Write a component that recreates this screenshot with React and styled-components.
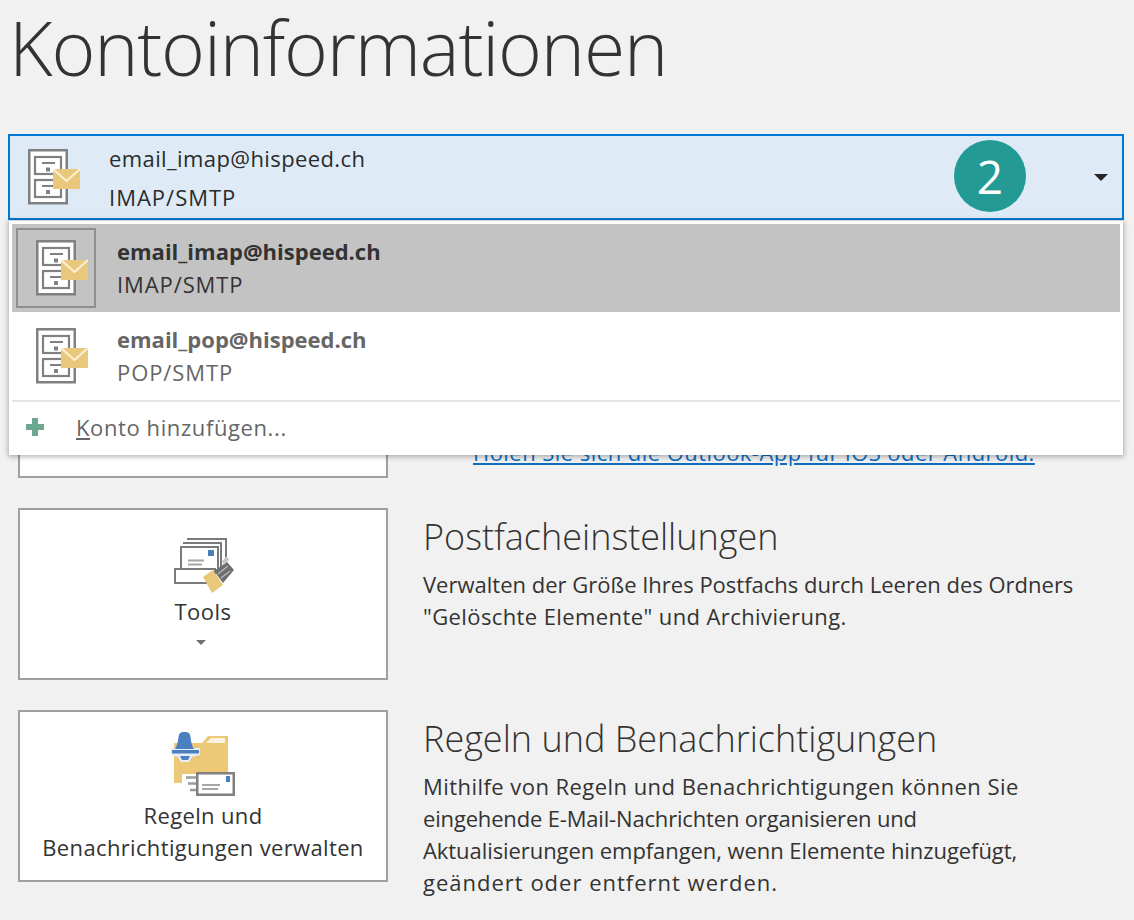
import React from 'react'
import styled, { createGlobalStyle } from 'styled-components'

const GlobalStyle = createGlobalStyle`
  html, body {
    margin: 0;
    background: #f1f1f1;
    font-family: "Open Sans", "Noto Sans", "Liberation Sans", sans-serif;
    color: #333;
  }
`

const Page = styled.div`
  width: 1134px;
  height: 920px;
  overflow: hidden;
  box-sizing: border-box;
  padding: 0 10px 0 8px;
`

const Title = styled.h1`
  margin: 0 0 40px 1px;
  font-size: 75px;
  line-height: 94px;
  font-weight: 300;
  color: #333;
  letter-spacing: -1.2px;
`

const AccountArea = styled.div`
  position: relative;
  height: 172px;
`

const Selector = styled.div`
  display: flex;
  align-items: center;
  box-sizing: border-box;
  height: 86px;
  padding: 0 14px 0 18px;
  background: #deebf7;
  border: 2px solid #0078d4;
`

const AccountText = styled.div`
  display: flex;
  flex-direction: column;
  gap: 9px;
  margin-left: 29px;
  font-size: 22px;
  line-height: 30px;
  color: #2b2b2b;
`

const Tracked = styled.span`
  letter-spacing: ${p => p.$track || 0}px;
`

const Caret = styled.span`
  display: block;
  width: 0;
  height: 0;
  border-left: ${p => p.$size}px solid transparent;
  border-right: ${p => p.$size}px solid transparent;
  border-top: ${p => p.$size}px solid ${p => p.$color};
`

const SelectorCaret = styled(Caret)`
  margin-left: auto;
`

const Badge = styled.div`
  position: absolute;
  left: 946px;
  top: 6px;
  width: 72px;
  height: 72px;
  border-radius: 50%;
  background: #249a95;
  color: #fff;
  font-size: 46px;
  font-weight: 500;
  line-height: 72px;
  text-align: center;
`

const Dropdown = styled.div`
  position: absolute;
  z-index: 2;
  left: 1px;
  top: 87px;
  width: 1114px;
  height: 234px;
  box-sizing: border-box;
  padding: 3px 3px 0;
  background: #fff;
  box-shadow: 0 1px 5px 1px rgba(0, 0, 0, 0.28);
`

const AccountRow = styled.div`
  display: flex;
  align-items: center;
  height: 88px;
  background: ${p => (p.$selected ? '#c3c3c3' : '#fff')};
`

const IconBox = styled.div`
  display: flex;
  align-items: center;
  box-sizing: border-box;
  flex: none;
  width: 80px;
  height: 80px;
  margin-left: 4px;
  padding-left: 18px;
  border: 2px solid ${p => (p.$selected ? '#8f8f8f' : 'transparent')};
`

const RowText = styled.div`
  display: flex;
  flex-direction: column;
  margin-left: 21px;
  font-size: 22px;
  line-height: 33px;
  color: ${p => (p.$selected ? '#333' : '#666')};
`

const RowName = styled.span`
  font-weight: 700;
`

const AddRow = styled.div`
  display: flex;
  align-items: center;
  box-sizing: border-box;
  height: 55px;
  padding: 0 0 4px 14px;
  border-top: 2px solid #e5e5e5;
  font-size: 22px;
  letter-spacing: 0.6px;
  color: #666;
`

const AddLabel = styled.span`
  margin-left: 32px;
`

const Key = styled.span`
  text-decoration: underline;
`

const Sections = styled.div`
  display: flex;
  flex-direction: column;
  gap: 30px;
  padding-left: 10px;
`

const Section = styled.div`
  display: flex;
  align-items: flex-start;
`

const Card = styled.div`
  display: flex;
  flex-direction: column;
  align-items: center;
  flex: none;
  box-sizing: border-box;
  width: 370px;
  height: 172px;
  padding-top: ${p => p.$top || 0}px;
  background: #fff;
  border: 2px solid #a0a0a0;
  font-size: 22px;
  line-height: 32px;
  text-align: center;
  color: #333;
`

const CardLabel = styled.div`
  margin-top: ${p => p.$gap || 0}px;
  letter-spacing: ${p => p.$track || 0}px;
  white-space: nowrap;
`

const ToolsCaret = styled(Caret)`
  margin: 13px 4px 0 0;
`

const SectionBody = styled.div`
  margin-left: 35px;
`

const Heading = styled.h2`
  margin: 6px 0 8px;
  font-size: 36px;
  line-height: 46px;
  font-weight: 300;
  color: #333;
`

const Line = styled.div`
  font-size: 22px;
  line-height: 32px;
  letter-spacing: ${p => p.$track || 0}px;
  color: #333;
  white-space: nowrap;
`

const AppLink = styled.a`
  display: block;
  margin: 130px 0 0 50px;
  font-size: 22px;
  line-height: 32px;
  letter-spacing: 0.45px;
  color: #0f6cbd;
  text-decoration: underline;
  white-space: nowrap;
`

const CabinetIcon = () => (
  <svg width="52" height="56" viewBox="0 0 52 56">
    <rect x="1.25" y="1.25" width="37.5" height="53" fill="#fff" stroke="#808080" strokeWidth="2.5" />
    <rect x="7" y="8" width="26" height="17" fill="#fff" stroke="#808080" strokeWidth="2.2" />
    <rect x="7" y="31" width="26" height="17" fill="#fff" stroke="#808080" strokeWidth="2.2" />
    <path d="M14 14h13M14 37h13" stroke="#808080" strokeWidth="2" />
    <rect x="18" y="18.500" width="4" height="4" fill="#808080" />
    <rect x="18" y="41" width="4" height="4" fill="#808080" />
    <rect x="25" y="20" width="27" height="20" fill="#e9c77b" />
    <path d="M25 20l13.500 12L52 20" fill="none" stroke="#fbf1da" strokeWidth="2" />
  </svg>
)

const ToolsIcon = () => (
  <svg width="62" height="60" viewBox="0 0 62 60">
    <path d="M15 1h39v28M11 5h38v24" fill="none" stroke="#7a7a7a" strokeWidth="2" />
    <rect x="9" y="9" width="37" height="24" fill="#fff" stroke="#7a7a7a" strokeWidth="2" />
    <rect x="36" y="12" width="6" height="6" fill="#4a7db5" />
    <path d="M16 22.500h16M16 26.500h14" stroke="#a6a6a6" strokeWidth="2" />
    <rect x="3" y="31" width="40" height="14" fill="#fff" stroke="#7a7a7a" strokeWidth="2" />
    <path d="M31 39l10-7 10 15-11 8-5-9z" fill="#e9c77b" />
    <path d="M42 33l13-9 7 8-11 13z" fill="#6e6e6e" />
    <path d="M46 36l10-8M49 40l9-7" stroke="#b5b5b5" strokeWidth="1.500" />
    <path d="M51 25l5-5" stroke="#c8c8c8" strokeWidth="4" />
  </svg>
)

const RulesIcon = () => (
  <svg width="64" height="66" viewBox="0 0 64 66">
    <path d="M3 13h28l6-7h20v47H3z" fill="#ecc877" />
    <path d="M40 8h14v5H35z" fill="#fbf3df" />
    <path d="M0 18h29v7l-8 2-3 5h-8l-3-5-7-2z" fill="#e6eef8" />
    <path d="M4 19c3-4 3-11 4-14 1-3 3-3 5.500-3s4.500 0 5.500 3c1 3 1 10 4 14z" fill="#4a80c0" />
    <rect x="1" y="20" width="27" height="3.500" fill="#4a80c0" />
    <path d="M9 26h10l-2 4h-6z" fill="#4a80c0" />
    <path d="M11 44h16v20H11z" fill="#fff" />
    <path d="M15 47.500h10M17 53.500h8M19 60h6" stroke="#9a9a9a" strokeWidth="2.500" />
    <rect x="26.250" y="43.250" width="36.500" height="21.500" fill="#fff" stroke="#808080" strokeWidth="2.500" />
    <rect x="55" y="46" width="4" height="6" fill="#4a80c0" />
    <path d="M31 55h18M31 59h16" stroke="#a6a6a6" strokeWidth="2" />
  </svg>
)

const PlusIcon = () => (
  <svg width="18" height="18" viewBox="0 0 18 18">
    <path d="M6 0h6v6h6v6h-6v6H6v-6H0V6h6z" fill="#6ba88f" />
  </svg>
)

const accounts = [
  { name: 'email_imap@hispeed.ch', type: 'IMAP/SMTP', selected: true },
  { name: 'email_pop@hispeed.ch', type: 'POP/SMTP', selected: false }
]

export default function App() {
  return (
    <Page>
      <GlobalStyle />
      <Title>Kontoinformationen</Title>
      <AccountArea>
        <Selector>
          <CabinetIcon />
          <AccountText>
            <Tracked $track={0.4}>email_imap@hispeed.ch</Tracked>
            <Tracked $track={1}>IMAP/SMTP</Tracked>
          </AccountText>
          <SelectorCaret $size={7} $color="#262626" />
        </Selector>
        <Badge>2</Badge>
        <Dropdown>
          {accounts.map(a => (
            <AccountRow key={a.name} $selected={a.selected}>
              <IconBox $selected={a.selected}>
                <CabinetIcon />
              </IconBox>
              <RowText $selected={a.selected}>
                <RowName>{a.name}</RowName>
                <Tracked $track={0.9}>{a.type}</Tracked>
              </RowText>
            </AccountRow>
          ))}
          <AddRow>
            <PlusIcon />
            <AddLabel><Key>K</Key>onto hinzufügen...</AddLabel>
          </AddRow>
        </Dropdown>
      </AccountArea>
      <Sections>
        <Section>
          <Card />
          <SectionBody>
            <AppLink>Holen Sie sich die Outlook-App für iOS oder Android.</AppLink>
          </SectionBody>
        </Section>
        <Section>
          <Card $top={28}>
            <ToolsIcon />
            <CardLabel $gap={-3} $track={0.5}>Tools</CardLabel>
            <ToolsCaret $size={5} $color="#707070" />
          </Card>
          <SectionBody>
            <Heading>Postfacheinstellungen</Heading>
            <Line>Verwalten der Größe Ihres Postfachs durch Leeren des Ordners</Line>
            <Line $track={0.4}>"Gelöschte Elemente" und Archivierung.</Line>
          </SectionBody>
        </Section>
        <Section>
          <Card $top={18}>
            <RulesIcon />
            <CardLabel $gap={3} $track={0.35}>Regeln und</CardLabel>
            <CardLabel $track={0.35}>Benachrichtigungen verwalten</CardLabel>
          </Card>
          <SectionBody>
            <Heading>Regeln und Benachrichtigungen</Heading>
            <Line $track={0.45}>Mithilfe von Regeln und Benachrichtigungen können Sie</Line>
            <Line $track={-0.17}>eingehende E-Mail-Nachrichten organisieren und</Line>
            <Line $track={-0.07}>Aktualisierungen empfangen, wenn Elemente hinzugefügt,</Line>
            <Line $track={1}>geändert oder entfernt werden.</Line>
          </SectionBody>
        </Section>
      </Sections>
    </Page>
  )
}
